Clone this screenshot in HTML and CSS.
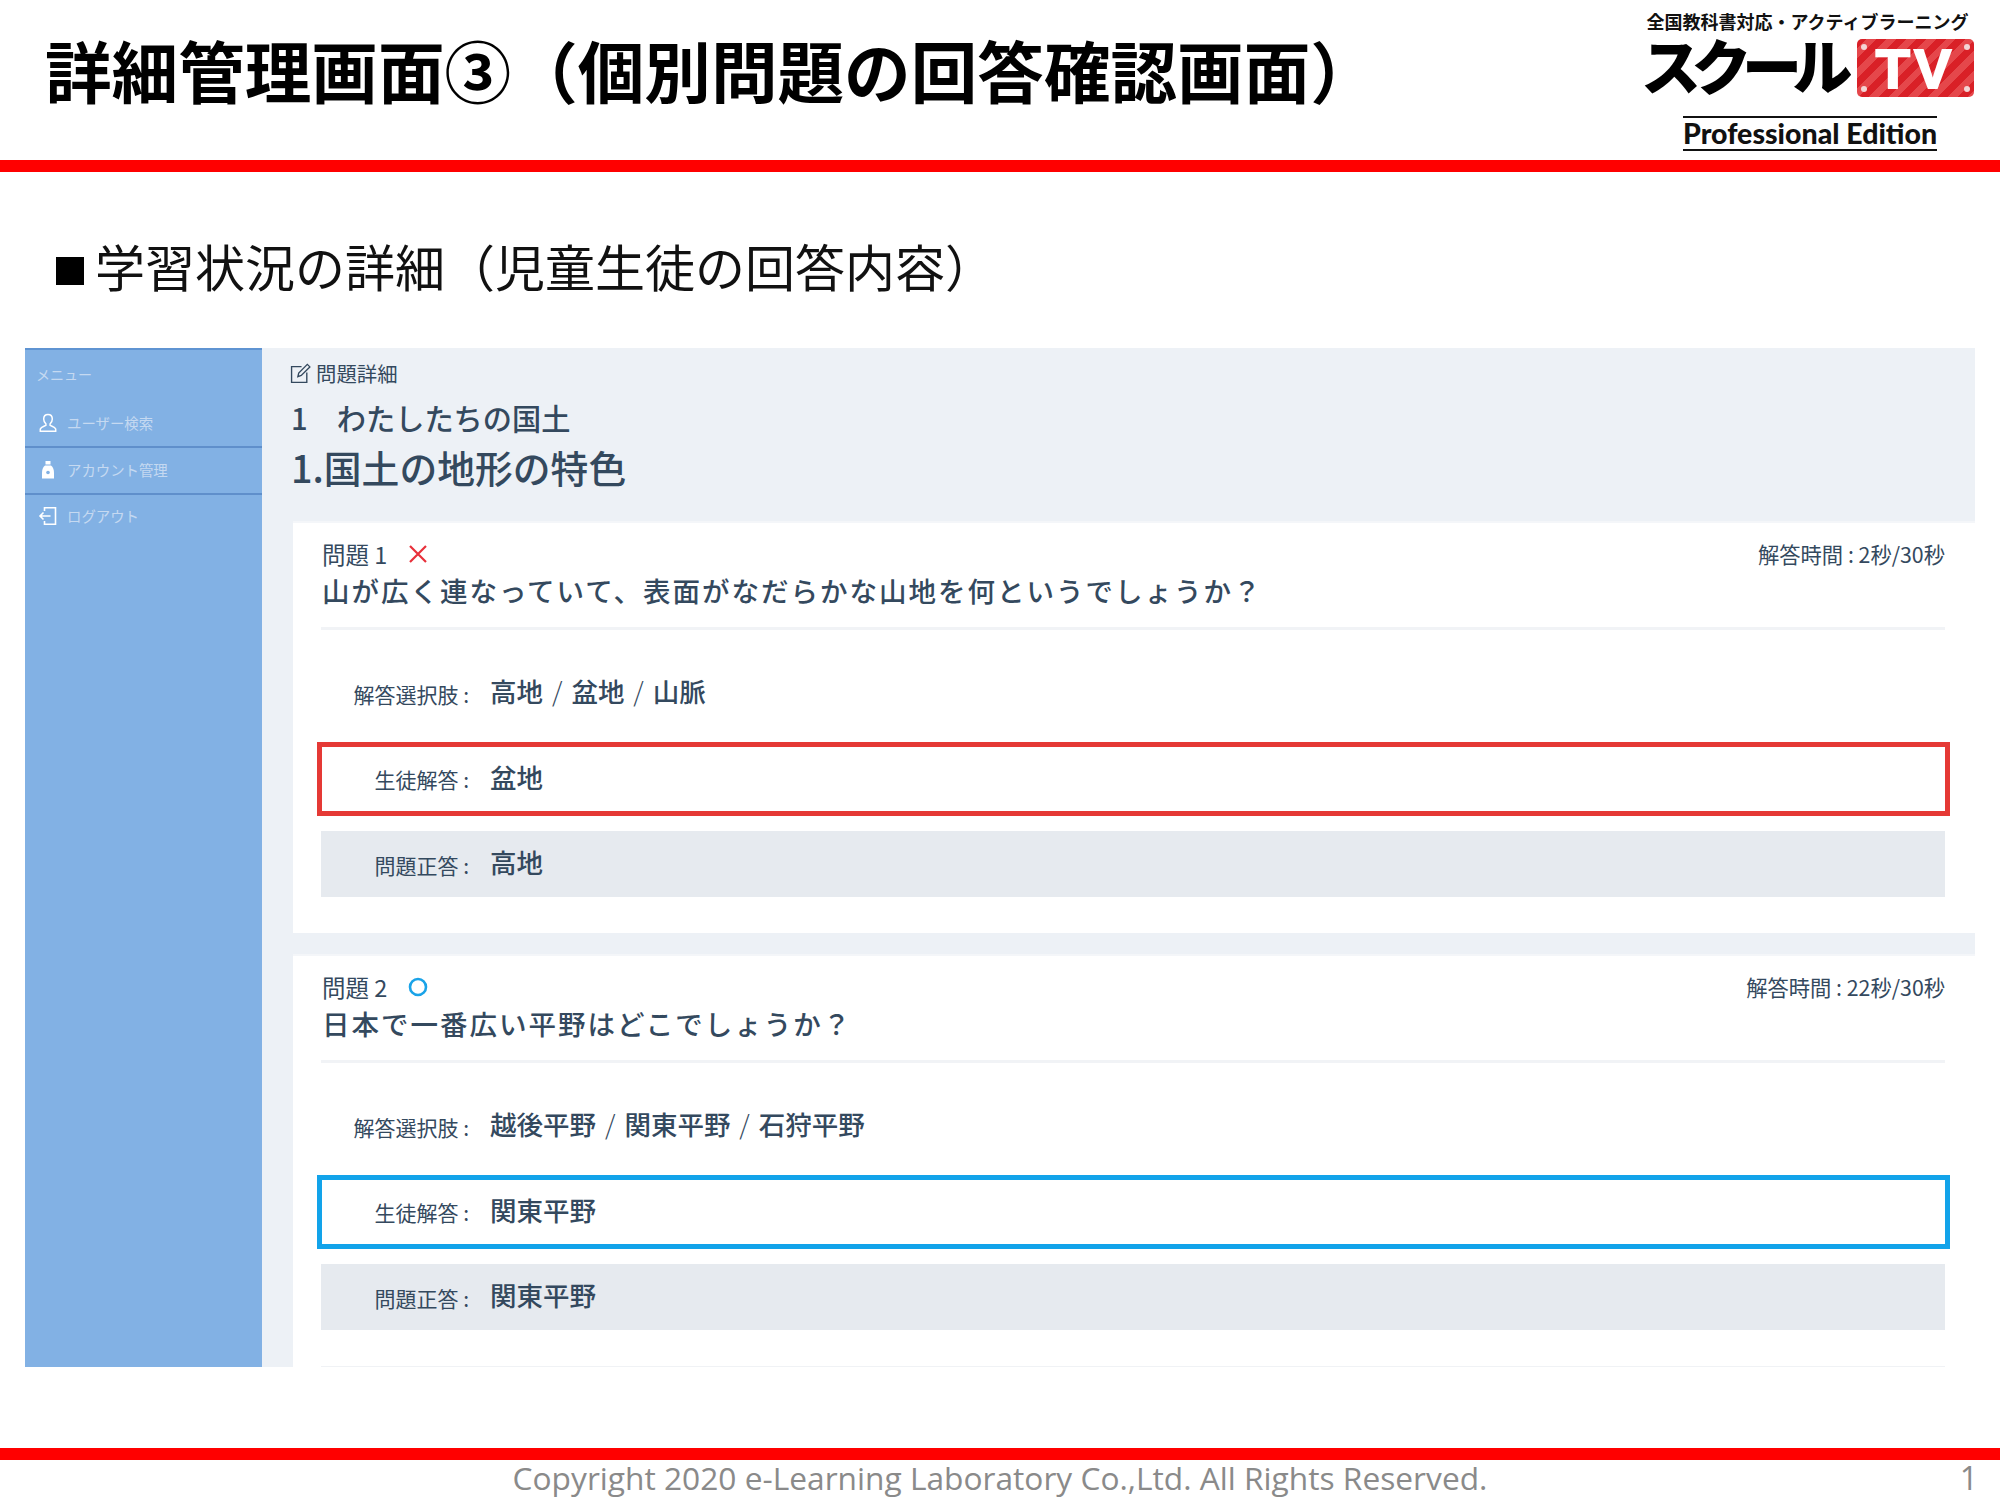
FILE: index.html
```html
<!DOCTYPE html>
<html lang="ja">
<head>
<meta charset="utf-8">
<title>詳細管理画面</title>
<link rel="stylesheet" href="styles.css">
</head>
<body>
<div class="slide">
  <header class="slide-head">
    <h1 class="slide-title">詳細管理画面③（個別問題の回答確認画面）</h1>
    <div class="logo">
      <div class="logo-tag">全国教科書対応・アクティブラーニング</div>
      <div class="logo-main">
        <span class="logo-word">スクール</span>
        <span class="logo-badge">TV<i class="rivet rivet-tl"></i><i class="rivet rivet-tr"></i><i class="rivet rivet-bl"></i><i class="rivet rivet-br"></i></span>
      </div>
      <div class="logo-edition">Professional Edition</div>
    </div>
  </header>
  <div class="red-bar"></div>
  <h2 class="slide-sub"><span class="sub-mark"></span>学習状況の詳細（児童生徒の回答内容）</h2>

  <div class="app">
    <aside class="side">
      <div class="side-title">メニュー</div>
      <div class="side-item">
        <svg class="side-icon" viewBox="0 0 20 20" fill="none" stroke="currentColor" stroke-width="1.5"><path d="M10 1.5c-2.8 0-4.3 2-4.3 4.6 0 2 .9 3.7 2.2 4.7v1.6c-1.8.9-5 1.7-5.6 3.6v2.2h15.4V16c-.6-1.900-3.800-2.700-5.600-3.600v-1.600c1.300-1 2.200-2.700 2.200-4.700 0-2.600-1.500-4.600-4.300-4.600z"/></svg>
        <span>ユーザー検索</span>
      </div>
      <div class="side-item">
        <svg class="side-icon" viewBox="0 0 20 20" fill="currentColor"><path d="M7.500 1h5v3.500h-5zM7 5.500h6c2 1.500 3 4 3 7.500v5.500H4V13c0-3.500 1-6 3-7.500z"/><circle cx="10" cy="12.500" r="1.800" fill="#82b1e4"/></svg>
        <span>アカウント管理</span>
      </div>
      <div class="side-item">
        <svg class="side-icon" viewBox="0 0 20 20" fill="none" stroke="currentColor" stroke-width="1.600"><path d="M6.500 5V1.800h11v16.400h-11V15"/><path d="M12.500 10H2M5.500 6.500L2 10l3.500 3.500"/></svg>
        <span>ログアウト</span>
      </div>
    </aside>

    <main class="main">
      <div class="crumb">
        <svg class="crumb-icon" viewBox="0 0 20 20" fill="none" stroke="currentColor" stroke-width="1.300"><path d="M11 3.500H1.500v15h14.500V9"/><path d="M7.500 13l.8-3.500L16.500 1.300l2.400 2.400-8.200 8.200z"/></svg>
        <span>問題詳細</span>
      </div>
      <div class="unit">1　わたしたちの国土</div>
      <div class="lesson">1.国土の地形の特色</div>

      <section class="card">
        <div class="q-head">
          <div class="q-no">問題 1
            <svg class="mark" viewBox="0 0 20 20" fill="none" stroke="#e8303a" stroke-width="2.200"><path d="M2 2l16 16M18 2L2 18"/></svg>
          </div>
          <div class="q-time">解答時間 : 2秒/30秒</div>
        </div>
        <div class="q-text">山が広く連なっていて、表面がなだらかな山地を何というでしょうか？</div>
        <div class="rows">
          <div class="row"><span class="row-label">解答選択肢 :</span><span class="row-value">高地 <i class="sep">/</i> 盆地 <i class="sep">/</i> 山脈</span></div>
          <div class="row row-wrong"><span class="row-label">生徒解答 :</span><span class="row-value">盆地</span></div>
          <div class="row row-answer"><span class="row-label">問題正答 :</span><span class="row-value">高地</span></div>
        </div>
      </section>

      <section class="card">
        <div class="q-head">
          <div class="q-no">問題 2
            <svg class="mark" viewBox="0 0 20 20" fill="none" stroke="#1aa3e8" stroke-width="2.600"><circle cx="10" cy="10" r="8"/></svg>
          </div>
          <div class="q-time">解答時間 : 22秒/30秒</div>
        </div>
        <div class="q-text">日本で一番広い平野はどこでしょうか？</div>
        <div class="rows">
          <div class="row"><span class="row-label">解答選択肢 :</span><span class="row-value">越後平野 <i class="sep">/</i> 関東平野 <i class="sep">/</i> 石狩平野</span></div>
          <div class="row row-right"><span class="row-label">生徒解答 :</span><span class="row-value">関東平野</span></div>
          <div class="row row-answer"><span class="row-label">問題正答 :</span><span class="row-value">関東平野</span></div>
        </div>
      </section>
    </main>
  </div>

  <footer class="slide-foot">
    <div class="red-bar"></div>
    <div class="foot-line">
      <span class="copyright">Copyright 2020 e-Learning Laboratory Co.,Ltd. All Rights Reserved.</span>
      <span class="page-no">1</span>
    </div>
  </footer>
</div>
</body>
</html>
```

FILE: styles.css
```css
* { box-sizing: border-box; }
html, body { margin: 0; padding: 0; background: #fff; }
body { font-family: "Noto Sans CJK JP", "Noto Sans", sans-serif; color: #000; }
.slide { width: 2000px; height: 1500px; display: flex; flex-direction: column; overflow: hidden; }

.slide-head { height: 160px; padding: 0 25px 0 45px; display: flex; justify-content: space-between; align-items: flex-start; }
.slide-title { margin: 27px 0 0; font-size: 66.600px; line-height: 84px; font-weight: 700; white-space: nowrap; }
.red-bar { height: 12px; background: #ff0000; flex: none; }

.logo { width: 330px; display: flex; flex-direction: column; align-items: center; }
.logo-tag { margin: 11px 5px 0 0; height: 20px; font-size: 18px; line-height: 20px; font-weight: 700; white-space: nowrap; color: #111; }
.logo-main { width: 330px; height: 60px; margin-top: 7px; display: flex; align-items: center; justify-content: space-between; padding-right: 1px; }
.logo-word { margin: -8px 0 0 -4px; font-size: 60px; line-height: 46px; font-weight: 900; letter-spacing: -9.500px; white-space: nowrap; color: #000; }
.logo-badge {
  position: relative; width: 117px; height: 58px; border-radius: 5px; color: #fff; text-align: center; flex: none;
  font-family: "Liberation Sans", sans-serif; font-weight: 700; font-size: 56px; line-height: 60px; letter-spacing: 4px;
  background: repeating-linear-gradient(135deg, #d92027 0 7px, #e5474b 7px 14px);
  -webkit-text-stroke: 2px #fff;
}
.rivet { position: absolute; width: 6px; height: 6px; border-radius: 50%; background: #f3d5d5; }
.rivet-tl { left: 4px; top: 5px; }
.rivet-tr { right: 4px; top: 5px; }
.rivet-bl { left: 4px; bottom: 5px; }
.rivet-br { right: 4px; bottom: 5px; }
.logo-edition {
  margin-top: 18px; width: 254px; height: 35px; border-top: 2px solid #111; border-bottom: 2px solid #111;
  font-family: "Lato", sans-serif; font-weight: 900; font-size: 28.500px; line-height: 31px; text-align: center; white-space: nowrap; color: #111;
}

.slide-sub { margin: 0; height: 176px; padding: 33px 0 0 55px; display: flex; align-items: flex-start; font-size: 50px; line-height: 120px; font-weight: 400; white-space: nowrap; color: #111; }
.sub-mark { width: 28px; height: 28px; background: #000; margin: 52px 11px 0 1px; flex: none; }

.app { margin: 0 25px; height: 1019px; display: flex; overflow: hidden; background: #edf1f6; }
.side { width: 237px; flex: none; background: #82b1e4; border-top: 2px solid #5f94d2; color: #c5d9f1; }
.side-title { height: 51px; padding: 14px 0 0 11px; font-size: 14px; line-height: 20px; }
.side-item { height: 47px; display: flex; align-items: center; padding: 0 0 2px 13px; gap: 9px; font-size: 14.400px; border-bottom: 2px solid #5f8fcb; white-space: nowrap; }
.side-item:last-child { border-bottom: 0; padding-bottom: 6px; }
.side-icon { width: 20px; height: 20px; flex: none; color: #fff; }

.main { flex: 1; min-width: 0; padding: 0 0 0 29px; color: #34495e; }
.crumb { display: flex; align-items: center; gap: 5px; height: 24px; margin-top: 13px; font-size: 20.400px; line-height: 24px; margin-left: -1px; }
.crumb-icon { width: 21px; height: 21px; flex: none; }
.unit { height: 38px; margin-top: 13px; font-size: 29.200px; line-height: 38px; font-weight: 500; white-space: nowrap; }
.lesson { height: 50px; margin-top: 6px; margin-bottom: 29px; font-size: 37.800px; line-height: 50px; font-weight: 500; white-space: nowrap; }

.card { margin-left: 2px; margin-bottom: 21px; height: 412px; background: #fff; border-top: 2px solid #f4f6f9; padding: 17px 30px 0 28px; }
.card:last-child { height: 420px; margin-bottom: 0; }
.q-head { display: flex; justify-content: space-between; height: 28px; }
.q-no { display: flex; align-items: center; gap: 21px; font-size: 23.500px; line-height: 28px; white-space: nowrap; margin-left: 1px; }
.mark { width: 20px; height: 20px; flex: none; }
.q-time { font-size: 21.300px; line-height: 28px; white-space: nowrap; }
.q-text { height: 59px; padding-top: 2px; margin-left: 1px; font-size: 27.500px; line-height: 40px; letter-spacing: 2px; white-space: nowrap; font-weight: 500; }
.rows { border-top: 3px solid #f1f3f6; padding-top: 28px; }
.card:last-child .rows { padding-bottom: 36px; border-bottom: 1px solid #f0f2f5; }
.row { height: 66px; display: flex; align-items: center; white-space: nowrap; }
.row-label { width: 148px; text-align: right; font-size: 21px; line-height: 28px; padding-top: 6px; flex: none; }
.row-value { margin-left: 21px; font-size: 26.500px; line-height: 36px; font-weight: 500; }
.sep { font-style: normal; font-weight: 300; margin: 0 3px; }
.row-wrong, .row-right { height: 74px; margin: 18px -5px 0 -4px; border: 5px solid #e53935; padding-bottom: 4px; }
.row-right { border-color: #12a3ea; }
.row-wrong .row-label, .row-right .row-label { width: 147px; padding-top: 4px; }
.row-answer { background: #e6eaef; margin-top: 15px; padding-bottom: 4px; }

.slide-foot { margin-top: 81px; }
.foot-line { height: 40px; position: relative; display: flex; justify-content: center; }
.copyright { font-family: "Open Sans", sans-serif; font-size: 31.700px; line-height: 36px; color: #8a8a8a; white-space: nowrap; }
.page-no { position: absolute; right: 22px; top: 0; font-family: "Open Sans", sans-serif; font-size: 32px; line-height: 36px; color: #8a8a8a; }
```
